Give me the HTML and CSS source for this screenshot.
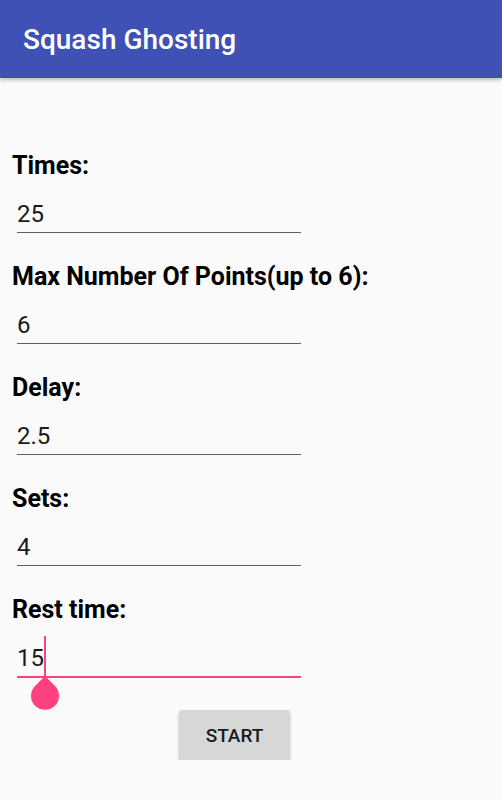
FILE: index.html
```html
<!DOCTYPE html>
<html>
<head>
  <title>Squash Ghosting</title>
  <link rel="stylesheet" href="styles.css">
</head>
<body>
  <div class="app-bar">
    <h1>Squash Ghosting</h1>
  </div>
  <div class="form">
    <div class="group">
      <label for="times">Times:</label>
      <input id="times" class="field" type="text" value="25">
    </div>
    <div class="group">
      <label for="points">Max Number Of Points(up to 6):</label>
      <input id="points" class="field" type="text" value="6">
    </div>
    <div class="group">
      <label for="delay">Delay:</label>
      <input id="delay" class="field" type="text" value="2.5">
    </div>
    <div class="group">
      <label for="sets">Sets:</label>
      <input id="sets" class="field" type="text" value="4">
    </div>
    <div class="group">
      <label>Rest time:</label>
      <div class="field focused">
        <span class="value">15</span><span class="cursor"></span>
        <svg class="handle" width="28" height="34" viewBox="0 0 28 34">
          <path d="M14 0 L24 10 A14 14 0 1 1 4 10 Z" fill="#ff4081"/>
        </svg>
      </div>
    </div>
    <div class="actions">
      <button id="start-button">START</button>
    </div>
  </div>
</body>
</html>
```

FILE: styles.css
```css
body {
  background-color: #fafafa;
  margin: 0;
  padding: 0;
  font-family: Roboto, "Liberation Sans", sans-serif;
}

.app-bar {
  height: 78px;
  background-color: #3f51b5;
  box-shadow: 0px 2px 4px rgba(0, 0, 0, 0.25);
  display: flex;
  align-items: center;
  padding-left: 23px;
}

h1 {
  margin: 0;
  color: #fff;
  font-size: 28px;
  font-weight: 500;
}

.form {
  padding: 73px 0 0 12px;
  display: flex;
  flex-direction: column;
}

.group {
  display: flex;
  flex-direction: column;
  margin-bottom: 29px;
}

label {
  font-size: 25px;
  font-weight: 700;
  line-height: 30px;
  height: 30px;
  color: #000;
}

.field {
  display: block;
  box-sizing: content-box;
  width: 284px;
  height: 30px;
  margin: 18px 0 0 5px;
  padding: 0 0 3px 0;
  border: none;
  border-bottom: 1px solid #5f5f5f;
  background: transparent;
  font-family: Roboto, "Liberation Sans", sans-serif;
  font-size: 24px;
  line-height: 30px;
  color: #1a1a1a;
  outline: none;
}

.focused {
  position: relative;
  border-bottom: 2px solid #ff4081;
}

.cursor {
  position: absolute;
  left: 27px;
  top: -7px;
  width: 2px;
  height: 40px;
  background-color: #ff4081;
}

.handle {
  position: absolute;
  left: 14px;
  top: 33px;
}

.actions {
  padding-left: 167px;
  margin-top: 3px;
}

#start-button {
  width: 111px;
  height: 50px;
  font-family: Roboto, "Liberation Sans", sans-serif;
  font-size: 19px;
  font-weight: 500;
  color: #1a1a1a;
  background-color: #d6d7d7;
  border: none;
  border-radius: 3px;
  box-shadow: 0px 2px 3px rgba(0, 0, 0, 0.25);
}
```
